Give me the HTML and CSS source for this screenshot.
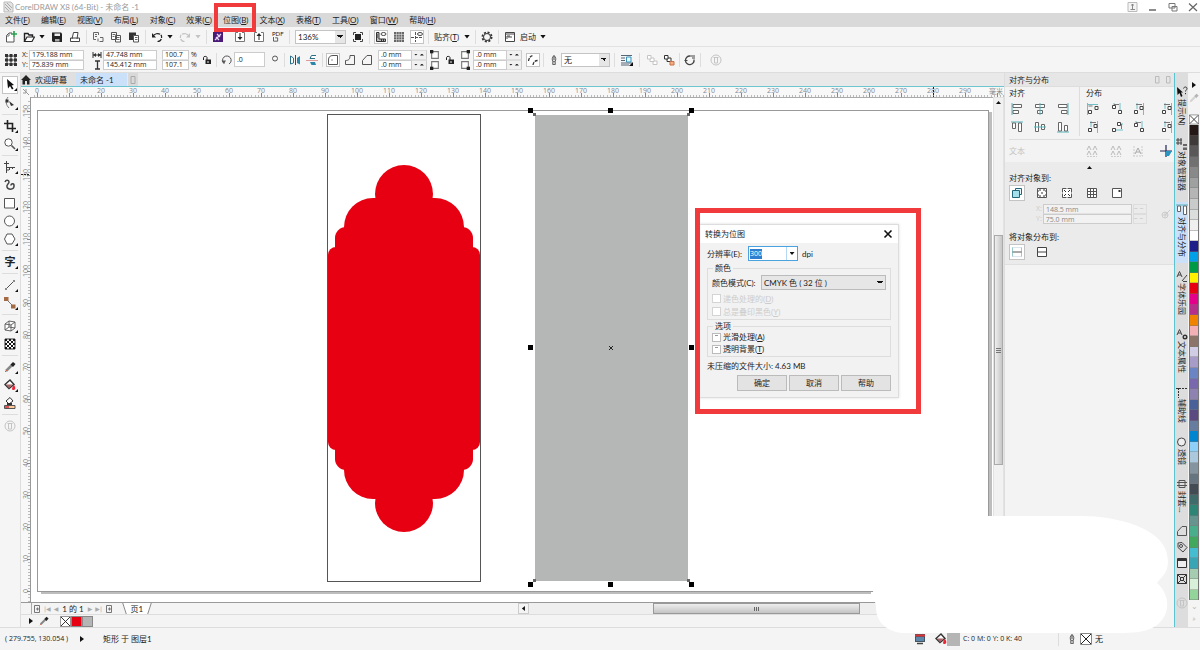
FILE: index.html
```html
<!DOCTYPE html>
<html lang="zh-CN">
<head>
<meta charset="utf-8">
<title>CorelDRAW X8 (64-Bit) - 未命名 -1</title>
<link rel="stylesheet" href="styles.css">
</head>
<body>
<svg class="defs" aria-hidden="true">
  <symbol id="new" viewBox="0 0 12 12"><path d="M7 2H4L1.500 4.500V11H9V6" fill="#fff" stroke="#555"/><path d="M4 2v3H1.500" fill="none" stroke="#777"/><path d="M9 0v6M6 3h6" stroke="#2f9d4f" stroke-width="1.600"/></symbol>
  <symbol id="open" viewBox="0 0 12 12"><path d="M1.500 10.500V2.500H5L6 4H9.500V6" fill="none" stroke="#222" stroke-width="1.400"/><path d="M1.500 10.500L4 6H11.500L9 10.500Z" fill="#fff" stroke="#222" stroke-width="1.200"/></symbol>
  <symbol id="save" viewBox="0 0 12 12"><path d="M1 1.500H10L11 2.500V11H2L1 10Z" fill="#222"/><path d="M3.500 2.500H9V5H3.500Z" fill="#eee"/><path d="M4 8H8.500V10.500H4Z" fill="#aaa"/></symbol>
  <symbol id="print" viewBox="0 0 12 12"><path d="M3 8L4.500 1.500H9L8 8M1.500 7V10.500H10.500V7Z" fill="#fff" stroke="#444"/></symbol>
  <symbol id="cut" viewBox="0 0 12 12"><path d="M1.500 1.500H6.500V4M1.500 1.500V8.500H4M3 3.500H5M3 5.500H5M6 10.500V7.500M7.500 10.500H11V6.500H8" fill="none" stroke="#666"/></symbol>
  <symbol id="copy" viewBox="0 0 12 12"><path d="M1.500 1.500H6.500V8.500H1.500ZM5.500 4.500H10.500V11H5.500Z" fill="#fff" stroke="#555"/><path d="M2.500 3.500H5.500M2.500 5.500H4.500M7 6.500H9.500M7 8.500H9.500" stroke="#666"/></symbol>
  <symbol id="paste" viewBox="0 0 12 12"><path d="M1 1.500H8V9H1Z" fill="#333"/><path d="M5.500 4.500H10.500V11H5.500Z" fill="#fff" stroke="#555"/><path d="M7 6.500H9.500M7 8.500H9.500" stroke="#666"/></symbol>
  <symbol id="undo" viewBox="0 0 12 12"><path d="M2 5C4 2 9 1.500 10.500 5C11 8 9.500 10.500 6.500 10.500" fill="none" stroke="currentColor" stroke-width="1.200" stroke-dasharray="8 1 3 1"/><path d="M1 2V6.500H5Z" fill="currentColor"/></symbol>
  <symbol id="redo" viewBox="0 0 12 12"><use href="#undo" transform="matrix(-1 0 0 1 12 0)"/></symbol>
  <symbol id="purple" viewBox="0 0 12 12"><path d="M1 1H11V11H1Z" fill="#4b1a78"/><path d="M3 9L9 3M5 3l3 3M4 6l3 3" stroke="#e5d6f2" stroke-width="1.300"/></symbol>
  <symbol id="import" viewBox="0 0 12 12"><path d="M4 1.500H1.500V10.500H10.500V1.500H8" fill="#fff" stroke="#777"/><path d="M6 2V7" stroke="#222"/><path d="M3.500 6H8.500L6 9Z" fill="#222"/></symbol>
  <symbol id="export" viewBox="0 0 12 12"><path d="M4 1.500H1.500V10.500H10.500V1.500H8" fill="#fff" stroke="#777"/><path d="M6 9V4" stroke="#222"/><path d="M3.500 5H8.500L6 2Z" fill="#222"/></symbol>
  <symbol id="full" viewBox="0 0 12 12"><path d="M3 3H9V9H3Z" fill="#222"/><path d="M1.500 4V1.500H4M8 1.500H10.500V4M10.500 8V10.500H8M4 10.500H1.500V8" fill="none" stroke="#444"/></symbol>
  <symbol id="rulers" viewBox="0 0 12 12"><path d="M1.500 1.500H4V8H10.500V10.500H1.500Z" fill="#bbb" stroke="#333"/><path d="M6.500 8v2M8.500 8v2M2 4h1M2 6h1" stroke="#333"/><ellipse cx="8.500" cy="3" rx="2.500" ry="1.500" fill="none" stroke="#444"/></symbol>
  <symbol id="grid" viewBox="0 0 12 12"><path d="M1 1H11V11H1Z" fill="#666"/><path d="M1 3.500H11M1 6H11M1 8.500H11M3.500 1V11M6 1V11M8.500 1V11" stroke="#ddd" stroke-width=".6"/></symbol>
  <symbol id="guides" viewBox="0 0 12 12"><path d="M0 6.500H11M4.500 1V11" stroke="#555" stroke-dasharray="3 1"/><ellipse cx="9" cy="3" rx="2.500" ry="1.500" fill="none" stroke="#444"/></symbol>
  <symbol id="gear" viewBox="0 0 12 12"><circle cx="6" cy="6" r="4.500" fill="none" stroke="#333" stroke-width="2" stroke-dasharray="2 1.530"/><circle cx="6" cy="6" r="3.500" fill="#f6f6f6" stroke="#333"/></symbol>
  <symbol id="launch" viewBox="0 0 12 12"><path d="M1.500 1.500H10.500V10.500H1.500Z" fill="#fff" stroke="#444"/><path d="M1 3H11" stroke="#444"/><path d="M3 8V5H6M4 6h4" stroke="#444" fill="none"/></symbol>
  <symbol id="origin" viewBox="0 0 12 12"><path d="M2 2H10V10H2ZM2 6H10M6 2V10" fill="none" stroke="#444"/><path d="M0 0h3v3H0zM4.500 0h3v3h-3zM9 0h3v3H9zM0 4.500h3v3H0zM4.500 4.500h3v3h-3zM9 4.500h3v3H9zM0 9h3v3H0zM4.500 9h3v3h-3zM9 9h3v3H9z" fill="#333"/></symbol>
  <symbol id="wid" viewBox="0 0 10 10"><path d="M1 2V8M9 2V8M1 5H9" stroke="#333"/><path d="M1 5L4 3V7ZM9 5L6 3V7Z" fill="#333"/></symbol>
  <symbol id="hei" viewBox="0 0 10 10"><path d="M3 1H8M3 9H8M5.500 1V9" stroke="#333" stroke-width="1.300"/></symbol>
  <symbol id="lock" viewBox="0 0 10 10"><path d="M3.500 4.500H9V9H3.500Z" fill="#222"/><path d="M1.500 5V2.500C1.500 1 5 1 5 2.500V5" fill="none" stroke="#222"/><path d="M6 6v2" stroke="#eee"/></symbol>
  <symbol id="rot" viewBox="0 0 12 12"><path d="M3 9.500A4.300 4.300 0 1 1 8 10" fill="none" stroke="#555"/><path d="M0.500 6.500H5L3 10Z" fill="#555"/></symbol>
  <symbol id="mirh" viewBox="0 0 12 12"><path d="M1.500 2V10L4.500 9V4Z" fill="#fff" stroke="#2b6f86"/><path d="M6.500 1V11" stroke="#444"/><path d="M11 2V10.500L8 9V4Z" fill="#2d87a8"/></symbol>
  <symbol id="mirv" viewBox="0 0 12 12"><path d="M0 6.500H12" stroke="#d99"/><path d="M10 1.500H5.500L4 4.500H9" fill="#fff" stroke="#2b6f86"/><path d="M10 11H5.500L4 8H9Z" fill="#2d87a8"/></symbol>
  <symbol id="c1" viewBox="0 0 12 12"><path d="M1.500 10.500V6C1.500 3 3 1.500 6 1.500H10.500V10.500Z" fill="none" stroke="#555"/><path d="M5 5.500v1" stroke="#333"/></symbol>
  <symbol id="c2" viewBox="0 0 12 12"><path d="M1.500 10.500V6.500C5 6.500 6 5 6 1.500H10.500V10.500Z" fill="none" stroke="#555"/></symbol>
  <symbol id="c3" viewBox="0 0 12 12"><path d="M1.500 10.500V6.500L6 1.500H10.500V10.500Z" fill="none" stroke="#555"/></symbol>
  <symbol id="corner" viewBox="0 0 9 9"><path d="M1.500 1.500H7.500V7.500H1.500Z" fill="#fff" stroke="#777"/><path d="M0 0H3V3H0Z" fill="#222"/></symbol>
  <symbol id="scale" viewBox="0 0 12 12"><path d="M1.500 7C2 3.500 3.500 2 6.500 1.500M6 11C6.500 8 8 6.500 11 6.500" fill="none" stroke="#333" stroke-width="1.300" stroke-dasharray="3 1"/></symbol>
  <symbol id="pen" viewBox="0 0 10 12"><path d="M5 .5C7.500 3 7.500 5 6.500 8H3.500C2.500 5 2.500 3 5 .5ZM5 1V6M3.500 8.500V11.500H6.500V8.500" fill="#ddd" stroke="#444"/></symbol>
  <symbol id="wrap" viewBox="0 0 12 12"><path d="M0 1.500H11M0 4H4M0 6.500H4M0 9H11M0 11H8" stroke="#567"/><path d="M5.500 3H10V8H5.500Z" fill="#dff" stroke="#3a8eb8"/><path d="M12 8V12H8Z" fill="#111"/></symbol>
  <symbol id="order" viewBox="0 0 12 12"><path d="M1.500 1.500H5V5H1.500ZM4 5V7.500H8V4H5M7 7.500V10.500H11V7H8" fill="#fff" stroke="currentColor"/></symbol>
  <symbol id="order2" viewBox="0 0 12 12"><path d="M1.500 1.500H5V5H1.500ZM4 5V7.500H8V4H5" fill="#fff" stroke="#333"/><path d="M7 7.500H11V11H7Z" fill="#f3ae86" stroke="#c87347"/></symbol>
  <symbol id="curve" viewBox="0 0 12 12"><path d="M10 5.500A4.300 4.300 0 1 1 6 2" fill="none" stroke="#444" stroke-width="1.300"/><path d="M6 2H11M8 4H11M0.500 6.500h3" stroke="#444"/></symbol>
  <symbol id="plus" viewBox="0 0 12 12"><circle cx="6" cy="6" r="5" fill="none" stroke="currentColor"/><path d="M3.500 3.500H8.500M4.500 3.500V9H7.500V3.500" fill="none" stroke="currentColor"/></symbol>
  <symbol id="home" viewBox="0 0 10 10"><path d="M5 0L0 5H1.500V9.500H4V6H6V9.500H8.500V5H10Z" fill="#222"/></symbol>
  <symbol id="pick" viewBox="0 0 12 12"><path d="M3 0L4 9.500L6 7L8 10.500L9.500 9.500L7.500 6.500L10 6Z" fill="#111"/></symbol>
  <symbol id="shape" viewBox="0 0 12 12"><path d="M4 0C1 4 2 8 5 11" fill="none" stroke="#777"/><path d="M1.500 2.500h3v3h-3zM5 4L10 8L7 9Z" fill="#333"/></symbol>
  <symbol id="crop" viewBox="0 0 12 12"><path d="M3.500 0V8.500H12M0 3.500H8.500V12" fill="none" stroke="#222" stroke-width="1.600"/></symbol>
  <symbol id="zoomt" viewBox="0 0 12 12"><circle cx="4.500" cy="4.500" r="3.700" fill="#fff" stroke="#555"/><path d="M7.500 7.500L11 11" stroke="#555" stroke-width="1.600"/></symbol>
  <symbol id="free" viewBox="0 0 12 12"><path d="M2.500 0V12M0 2.500H5M3 6.500H11M5.500 6V9M8.500 6V8M3 9h2" fill="none" stroke="#444"/></symbol>
  <symbol id="art" viewBox="0 0 12 12"><path d="M1 3C2 .5 5 1 5 3C5 5 2 5.500 3 8C4 11 9.500 11 10 7.500C10.500 4 7 4 7 6.500" fill="none" stroke="#444" stroke-width="1.500"/></symbol>
  <symbol id="rect" viewBox="0 0 12 12"><path d="M.5 1.500H10.500V11H.5Z" fill="#fff" stroke="#555"/></symbol>
  <symbol id="ell" viewBox="0 0 12 12"><circle cx="5.500" cy="6" r="5" fill="#fff" stroke="#555"/></symbol>
  <symbol id="lens" viewBox="0 0 12 12"><circle cx="5.500" cy="6" r="4" fill="#eee" stroke="#444"/></symbol>
  <symbol id="poly" viewBox="0 0 12 12"><path d="M3 1H8L11 6L8 11H3L.5 6Z" fill="#fff" stroke="#555"/></symbol>
  <symbol id="line" viewBox="0 0 12 12"><path d="M2 10L10 2" stroke="#555"/><path d="M1 9h2v2H1zM9 1h2v2H9z" fill="#888"/></symbol>
  <symbol id="conn" viewBox="0 0 12 12"><path d="M2 2L9.500 9.500" stroke="#777"/><path d="M0 0h4.500v4H0zM7 7.500h4.500v4H7z" fill="#a36a43"/></symbol>
  <symbol id="cube" viewBox="0 0 12 12"><path d="M1 4L5 1L11 2V8L7 11L1 10ZM1 4L7 5L11 2M7 5V11M5 1V7L1 10M5 7L11 8" fill="#fff" stroke="#555" stroke-width=".9"/></symbol>
  <symbol id="check" viewBox="0 0 12 12"><path d="M1 1H11V11H1Z" fill="#fff" stroke="#333"/><path d="M1 2H11M1 6H11M1 10H11" stroke="#111" stroke-width="2" stroke-dasharray="2 2"/><path d="M3 4H11M3 8H11" stroke="#111" stroke-width="2" stroke-dasharray="2 2"/></symbol>
  <symbol id="drop" viewBox="0 0 12 12"><path d="M2 10L8 4" stroke="#888" stroke-width="2.500"/><path d="M6.500 3.500L9 1L11.500 3L9 6Z" fill="#222"/><path d="M1 11L3 9" stroke="#c06a4a"/></symbol>
  <symbol id="bucket" viewBox="0 0 12 12"><path d="M1 5.500L6 1L10 5.500L5 9.500Z" fill="#fff" stroke="#333" stroke-width="1.400"/><path d="M2 5.500H9L5 9Z" fill="#a66"/><path d="M10 6C12 8.500 11.500 11 9.500 11S7.500 9 10 6Z" fill="#e23"/></symbol>
  <symbol id="smart" viewBox="0 0 12 12"><path d="M2 4L6 0.500L9 4L5 7Z" fill="#fff" stroke="#333"/><path d="M3 6h5v2H3z" fill="#333"/><path d="M.5 8.500H11V11.500H.5Z" fill="#fc9" stroke="#555"/><path d="M1 9h4v2H1z" fill="#d55"/></symbol>
  <symbol id="ax" viewBox="0 0 12 12"><path d="M1 0V12" stroke="#56b4bd"/><path d="M2 1.500H10.500V4.500H2ZM2 7.500H7.500V10.500H2Z" fill="#fff" stroke="#666"/></symbol>
  <symbol id="ac" viewBox="0 0 12 12"><path d="M1.500 1.500H10.500V4.500H1.500ZM3.500 7.500H8.500V10.500H3.500Z" fill="#fff" stroke="#666"/><path d="M6 0V12" stroke="#56b4bd"/></symbol>
  <symbol id="d1" viewBox="0 0 12 12"><path d="M.5 0V12M0 1.500H11" stroke="#70bfc7"/><path d="M1.500 7.500H4.500V10.500H1.500ZM8 3.500H11V6.500H8Z" fill="#fff" stroke="#444"/><path d="M1.500 3h4" stroke="#777"/></symbol>
  <symbol id="d2" viewBox="0 0 12 12"><path d="M3 0V6M9 0V8" stroke="#70bfc7"/><path d="M1.500 2.500H4.500V5.500H1.500ZM7.500 7.500H10.500V10.500H7.500Z" fill="#fff" stroke="#444"/><path d="M3 1.500h5" stroke="#777"/></symbol>
  <symbol id="d3" viewBox="0 0 12 12"><path d="M4 0V6M10.500 0V12" stroke="#70bfc7"/><path d="M1.500 7.500H4.500V10.500H1.500ZM7 3.500H10V6.500H7Z" fill="#fff" stroke="#444"/><path d="M3 1.500h6" stroke="#777"/></symbol>
  <symbol id="dock-a" viewBox="0 0 12 12"><path d="M2 1V11M10 1V11M1 11H11" stroke="#ccc" stroke-dasharray="2 1"/><path d="M3 9L6 3L9 9M4 7H8" stroke="#aaa" fill="none"/></symbol>
  <symbol id="dock-b" viewBox="0 0 12 12"><path d="M1 11.500H11" stroke="#ccc" stroke-dasharray="2 1"/><path d="M1 5L3 1L5 5M7 5L9 1L11 5M1 10L3 6L5 10M7 10L9 6L11 10" stroke="#bbb" fill="none"/></symbol>
  <symbol id="blueplus" viewBox="0 0 12 12"><path d="M6 0V12M0 6H12" stroke="#225" stroke-width="1.200"/><path d="M6 6H12L9 11H6Z" fill="#2d95bd"/></symbol>
  <symbol id="objs" viewBox="0 0 12 12"><path d="M4.500 1.500H10.500V7.500H4.500Z" fill="#eafafc" stroke="#267"/><path d="M1.500 3.500H8.500V10.500H1.500Z" fill="#a5dfeb" stroke="#267"/></symbol>
  <symbol id="pge" viewBox="0 0 12 12"><path d="M1.500 1.500H10.500V10.500H1.500Z" fill="#fff" stroke="#555"/><path d="M4 2v2M8 2v2M4 8v2M8 8v2M2 4h1M9 4h1M2 8h1M9 8h1M6 5v2" stroke="#333"/></symbol>
  <symbol id="pgc" viewBox="0 0 12 12"><path d="M1.500 1.500H10.500V10.500H1.500Z" fill="#fff" stroke="#555"/><path d="M3 3l2 2M9 3L7 5M3 9l2-2M9 9L7 7" stroke="#333"/><path d="M6 0v2M6 10v2M0 6h2M10 6h2" stroke="#fff"/></symbol>
  <symbol id="pgg" viewBox="0 0 12 12"><path d="M1.500 1.500H10.500V10.500H1.500ZM4.500 1V11M7.500 1V11M1 4.500H11M1 7.500H11" fill="#fff" stroke="#555"/></symbol>
  <symbol id="pgp" viewBox="0 0 12 12"><path d="M1.500 1.500H10.500V10.500H1.500Z" fill="#fff" stroke="#555"/><path d="M7 4h3M8.500 3v2" stroke="#333"/></symbol>
  <symbol id="ext" viewBox="0 0 12 12"><path d="M1.500 1V11M10.500 1V11" stroke="#9cc" /><path d="M1.500 6H10.500" stroke="#555"/><path d="M1.500 1.500H10.500M1.500 10.500H10.500" stroke="#dde6ee"/></symbol>
  <symbol id="extp" viewBox="0 0 12 12"><path d="M1.500 1.500H10.500V10.500H1.500ZM1.500 6H10.500" fill="#fff" stroke="#444"/></symbol>
  <symbol id="hint" viewBox="0 0 12 12"><path d="M1 1L1.500 9L3.500 7L5 11L6.500 10L5 6.500H7Z" fill="#111"/><path d="M7.500 2.500C8 .5 11 .5 11 2.500C11 4 9.500 4 9.500 5.500M9.500 7v1.200" fill="none" stroke="#333"/></symbol>
  <symbol id="tree" viewBox="0 0 12 12"><path d="M0 2H6M0 5H6M2 0V7M5 0V7" stroke="#444"/><path d="M7 6h4v2H7zM7 9.500h4V12H7z" fill="#666"/></symbol>
  <symbol id="font" viewBox="0 0 12 12"><path d="M1 7L3.500 1.500L6 7M2 5H5M6 11L11 5M7 11.500H11" fill="none" stroke="#444"/></symbol>
  <symbol id="fprop" viewBox="0 0 12 12"><path d="M1 7L3.500 1.500L6 7M2 5H5" fill="none" stroke="#444"/><circle cx="9" cy="9" r="1.800" fill="none" stroke="#333" stroke-width="1.400"/></symbol>
  <symbol id="guidei" viewBox="0 0 12 12"><path d="M0 2.500H12M2.500 2V12" stroke="#333" stroke-dasharray="2 1"/></symbol>
  <symbol id="tag" viewBox="0 0 12 12"><path d="M2 2L6 1.500L11 6.500L7 11L2 6.500Z" fill="#ddd" stroke="#444"/><circle cx="5" cy="5" r="1.500" fill="none" stroke="#444"/></symbol>
  <symbol id="win" viewBox="0 0 12 12"><path d="M1.500 1.500H10.500V10.500H1.500Z" fill="#eee" stroke="#333"/><path d="M1 3H11" stroke="#333" stroke-width="2"/></symbol>
  <symbol id="bevel" viewBox="0 0 12 12"><path d="M1.500 1.500H10.500V10.500H1.500ZM4.500 4.500H7.500V7.500H4.500ZM1.500 1.500L4.500 4.500M10.500 1.500L7.500 4.500M10.500 10.500L7.500 7.500M1.500 10.500L4.500 7.500" fill="none" stroke="#333"/></symbol>
  <symbol id="env" viewBox="0 0 12 12"><path d="M3 2.500H9V9.500H3ZM1 4.500H11M1 7.500H11" fill="none" stroke="#555"/></symbol>
  <symbol id="none" viewBox="0 0 12 12"><path d="M.5 .5H11.500V11.500H.5Z" fill="#fff" stroke="#888"/><path d="M1 1L11 11M11 1L1 11" stroke="#222"/></symbol>
  <symbol id="mon" viewBox="0 0 12 12"><path d="M1 1H11V9H1Z" fill="#456"/><path d="M1 2.500H11" stroke="#d33" stroke-width="2"/><path d="M2 5H10M2 7H10" stroke="#7be"/><path d="M3 10.500H9" stroke="#444" stroke-width="1.500"/></symbol>
  <symbol id="addp" viewBox="0 0 8 8"><path d="M1.500 .5H6.500V7.500H1.500ZM3 4H6M4.500 2.500V5.500" fill="none" stroke="#777"/></symbol>
</svg>

<header class="titlebar">
  <svg class="i12" viewBox="0 0 12 12"><path d="M2 1H9L11 3V11H2Z" fill="#e4e4e4" stroke="#bbb"/><path d="M3 3L9 9M5 2L10 7M3 6L7 10" stroke="#aaa"/></svg>
  <h1>CorelDRAW X8 (64-Bit) - 未命名 -1</h1>
  <div class="winbtns">
    <button aria-label="用户"><svg viewBox="0 0 12 12"><path d="M1 1.500H10V10.500H1Z" fill="#f4f4f4" stroke="#bbb"/><path d="M5.500 3V8M3.500 8.500H8M4 4H7" stroke="#888"/></svg></button>
    <button aria-label="最小化"><svg viewBox="0 0 12 12"><path d="M2 9H9" stroke="#666" stroke-width="1.500"/></svg></button>
    <button aria-label="还原"><svg viewBox="0 0 12 12"><path d="M2 2.500H8V7H2ZM5 5.500H10V10H5Z" fill="#fff" stroke="#777"/></svg></button>
    <button aria-label="关闭"><svg viewBox="0 0 12 12"><path d="M2 2.500L10 10M10 2.500L2 10" stroke="#666" stroke-width="1.200"/></svg></button>
  </div>
</header>

<nav class="menubar">
  <button>文件(<u>F</u>)</button><button>编辑(<u>E</u>)</button><button>视图(<u>V</u>)</button><button>布局(<u>L</u>)</button><button>对象(<u>C</u>)</button><button>效果(<u>C</u>)</button><button class="marked">位图(<u>B</u>)</button><button>文本(<u>X</u>)</button><button>表格(<u>T</u>)</button><button>工具(<u>O</u>)</button><button>窗口(<u>W</u>)</button><button>帮助(<u>H</u>)</button>
</nav>

<div class="toolbar standard">
  <button aria-label="新建"><svg class="i12"><use href="#new"/></svg></button>
  <button class="split" aria-label="打开"><svg class="i12"><use href="#open"/></svg><i class="caret"></i></button>
  <button aria-label="保存"><svg class="i12"><use href="#save"/></svg></button>
  <button aria-label="打印"><svg class="i12"><use href="#print"/></svg></button>
  <i class="sep"></i>
  <button aria-label="剪切"><svg class="i12"><use href="#cut"/></svg></button>
  <button aria-label="复制"><svg class="i12"><use href="#copy"/></svg></button>
  <button aria-label="粘贴"><svg class="i12"><use href="#paste"/></svg></button>
  <i class="sep"></i>
  <button class="split" aria-label="撤消"><svg class="i12"><use href="#undo"/></svg><i class="caret"></i></button>
  <button class="split off" aria-label="重做"><svg class="i12"><use href="#redo"/></svg><i class="caret"></i></button>
  <i class="sep"></i>
  <button aria-label="搜索内容"><svg class="i12"><use href="#purple"/></svg></button>
  <div class="io">
    <button aria-label="导入"><svg class="i12"><use href="#import"/></svg></button>
    <button aria-label="导出"><svg class="i12"><use href="#export"/></svg></button>
    <button class="pdf" aria-label="发布为 PDF">PDF<svg class="i6" viewBox="0 0 8 6"><path d="M1 0V5H6V1H3" fill="none" stroke="#444"/></svg></button>
  </div>
  <i class="sep"></i>
  <select class="combo zoomlevel" aria-label="缩放级别"><option>136%</option></select>
  <button aria-label="全屏预览"><svg class="i12"><use href="#full"/></svg></button>
  <i class="sep"></i>
  <button class="on" aria-label="显示标尺"><svg class="i12"><use href="#rulers"/></svg></button>
  <button aria-label="显示网格"><svg class="i12"><use href="#grid"/></svg></button>
  <button class="on" aria-label="显示辅助线"><svg class="i12"><use href="#guides"/></svg></button>
  <i class="sep"></i>
  <button class="split snap"><span>贴齐(<u>T</u>)</span><i class="caret"></i></button>
  <i class="sep"></i>
  <button aria-label="选项"><svg class="i12"><use href="#gear"/></svg></button>
  <i class="sep"></i>
  <button class="split"><svg class="i12"><use href="#launch"/></svg>启动<i class="caret"></i></button>
</div>

<div class="toolbar property">
  <svg class="i12"><use href="#origin"/></svg>
  <div class="pair"><label>X:<input class="w-xy" value="179.188 mm"></label><label>Y:<input class="w-xy" value="75.839 mm"></label></div>
  <div class="pair size"><label><svg class="i10"><use href="#wid"/></svg><input class="w-xy" aria-label="宽度" value="47.748 mm"></label><label><svg class="i10"><use href="#hei"/></svg><input class="w-xy" aria-label="高度" value="145.412 mm"></label></div>
  <div class="pair"><label><input class="w-pct" aria-label="水平缩放" value="100.7"><span class="pc">%</span></label><label><input class="w-pct" aria-label="垂直缩放" value="107.1"><span class="pc">%</span></label></div>
  <button aria-label="锁定比率"><svg class="i10"><use href="#lock"/></svg></button>
  <i class="sep"></i>
  <label class="rotate"><svg class="i12"><use href="#rot"/></svg><input aria-label="旋转角度" value=".0"></label>
  <svg class="i10" viewBox="0 0 10 10"><circle cx="5" cy="3.500" r="2.500" fill="none" stroke="#555"/></svg>
  <i class="sep"></i>
  <button aria-label="水平镜像"><svg class="i12"><use href="#mirh"/></svg></button>
  <button aria-label="垂直镜像"><svg class="i12"><use href="#mirv"/></svg></button>
  <i class="sep"></i>
  <button class="on" aria-label="圆角"><svg class="i12"><use href="#c1"/></svg></button>
  <button aria-label="扇形角"><svg class="i12"><use href="#c2"/></svg></button>
  <button aria-label="倒棱角"><svg class="i12"><use href="#c3"/></svg></button>
  <div class="radii">
    <div class="pair"><div class="spin"><input aria-label="左上角" value=".0 mm"><i></i><i class="up"></i></div><div class="spin"><input aria-label="左下角" value=".0 mm"><i></i><i class="up"></i></div></div>
    <div class="pair"><svg class="i10"><use href="#corner"/></svg><svg class="i10 down"><use href="#corner"/></svg></div>
  </div>
  <button aria-label="同时编辑所有角"><svg class="i10"><use href="#lock"/></svg></button>
  <div class="radii mirrored">
    <div class="pair"><svg class="i10"><use href="#corner"/></svg><svg class="i10 down"><use href="#corner"/></svg></div>
    <div class="pair"><div class="spin"><input aria-label="右上角" value=".0 mm"><i></i><i class="up"></i></div><div class="spin"><input aria-label="右下角" value=".0 mm"><i></i><i class="up"></i></div></div>
  </div>
  <button class="on" aria-label="相对角缩放"><svg class="i12"><use href="#scale"/></svg></button>
  <i class="sep"></i>
  <label class="outline"><svg class="i10"><use href="#pen"/></svg><select class="combo" aria-label="轮廓宽度"><option>无</option></select></label>
  <i class="sep"></i>
  <button class="wrapbtn" aria-label="文本换行"><svg class="i12"><use href="#wrap"/></svg></button>
  <i class="sep"></i>
  <button class="off" aria-label="到图层前面"><svg class="i12"><use href="#order"/></svg></button>
  <button aria-label="到图层后面"><svg class="i12"><use href="#order2"/></svg></button>
  <i class="sep"></i>
  <button aria-label="转换为曲线"><svg class="i12"><use href="#curve"/></svg></button>
  <i class="sep"></i>
  <button class="off last" aria-label="快速自定义"><svg class="i12"><use href="#plus"/></svg></button>
</div>

<main class="main">
  <aside class="toolbox">
    <button class="on fly" aria-label="选择"><svg class="i12"><use href="#pick"/></svg></button>
    <button class="fly" aria-label="形状"><svg class="i12"><use href="#shape"/></svg></button>
    <i></i>
    <button class="fly" aria-label="裁剪"><svg class="i12"><use href="#crop"/></svg></button>
    <button class="fly" aria-label="缩放"><svg class="i12"><use href="#zoomt"/></svg></button>
    <i></i>
    <button class="fly" aria-label="手绘"><svg class="i12"><use href="#free"/></svg></button>
    <button aria-label="艺术笔"><svg class="i12"><use href="#art"/></svg></button>
    <button class="fly" aria-label="矩形"><svg class="i12"><use href="#rect"/></svg></button>
    <button class="fly" aria-label="椭圆形"><svg class="i12"><use href="#ell"/></svg></button>
    <button class="fly" aria-label="多边形"><svg class="i12"><use href="#poly"/></svg></button>
    <i></i>
    <button class="fly glyph">字</button>
    <i></i>
    <button class="fly" aria-label="平行度量"><svg class="i12"><use href="#line"/></svg></button>
    <button class="fly" aria-label="连接器"><svg class="i12"><use href="#conn"/></svg></button>
    <i></i>
    <button class="fly" aria-label="立体化"><svg class="i12"><use href="#cube"/></svg></button>
    <button aria-label="透明度"><svg class="i12"><use href="#check"/></svg></button>
    <i></i>
    <button class="fly" aria-label="颜色滴管"><svg class="i12"><use href="#drop"/></svg></button>
    <button class="fly" aria-label="交互式填充"><svg class="i12"><use href="#bucket"/></svg></button>
    <button aria-label="智能填充"><svg class="i12"><use href="#smart"/></svg></button>
    <i></i>
    <button class="off" aria-label="快速自定义"><svg class="i12"><use href="#plus"/></svg></button>
  </aside>

  <section class="workspace">
    <div class="doctabs">
      <button class="welcome"><svg class="i10"><use href="#home"/></svg>欢迎屏幕</button>
      <button class="active">未命名 -1</button>
      <button class="add" aria-label="新文档"><svg class="i10" viewBox="0 0 10 10"><path d="M3 1.500H7V8.500H3Z" fill="none" stroke="#aaa"/></svg></button>
    </div>
    <div class="hruler"><svg id="hr"></svg></div>
    <div class="drawing">
      <svg id="vr" class="vruler"></svg>
      <div class="stage">
        <svg class="art" aria-label="绘图窗口">
          <rect x="958" y="15" width="3" height="482" fill="#bdbdbd"/>
          <rect x="10" y="494" width="830" height="3" fill="#bdbdbd"/>
          <rect x="6.500" y="13.500" width="951" height="481" fill="#fff" stroke="#999"/>
          <rect x="296.500" y="17.500" width="153" height="467" fill="#fff" stroke="#555"/>
          <g fill="#e60012">
            <circle cx="373" cy="97" r="29"/><circle cx="373" cy="406" r="29"/>
            <rect x="313" y="101" width="120" height="301" rx="29"/>
            <rect x="304" y="130" width="138" height="243" rx="11"/>
            <rect x="297" y="150" width="152" height="203" rx="8"/>
          </g>
          <rect x="504" y="18" width="153" height="466" fill="#b5b6b6"/>
          <path d="M578 249l4 4M582 249l-4 4" stroke="#222"/>
          <path d="M497 11h5v5h-5zM577 11h5v5h-5zM658 11h5v5h-5zM497 248h5v5h-5zM658 248h5v5h-5zM497 485h5v5h-5zM577 485h5v5h-5zM658 485h5v5h-5z" fill="#000"/>
          <path d="M502 16h3v3h-3zM656 16h3v3h-3zM502 482h3v3h-3zM656 482h3v3h-3z" fill="#666"/>
        </svg>

        <form class="dialog" onsubmit="return false">
          <header><h2>转换为位图</h2><button aria-label="关闭"><svg class="i10" viewBox="0 0 10 10"><path d="M1.500 1.500L8.500 8.500M8.500 1.500L1.500 8.500" stroke="#111" stroke-width="1.600"/></svg></button></header>
          <div class="row res"><label for="dpi">分辨率(E):</label><div class="dpibox"><input id="dpi" value="300"><button aria-label="分辨率列表"><i class="caret"></i></button></div><span>dpi</span></div>
          <fieldset class="colour"><legend>颜色</legend>
            <div class="row mode"><label for="mode">颜色模式(C):</label><select id="mode"><option>CMYK 色 ( 32 位 )</option></select></div>
            <label class="ck dis"><input type="checkbox" disabled><span>递色处理的(<u>D</u>)</span></label>
            <label class="ck dis"><input type="checkbox" disabled><span>总是叠印黑色(<u>Y</u>)</span></label>
          </fieldset>
          <fieldset><legend>选项</legend>
            <label class="ck"><input type="checkbox"><span>光滑处理(<u>A</u>)</span></label>
            <label class="ck"><input type="checkbox"><span>透明背景(<u>T</u>)</span></label>
          </fieldset>
          <p>未压缩的文件大小: 4.63 MB</p>
          <footer><button>确定</button><button>取消</button><button>帮助</button></footer>
        </form>
        <div class="frame"></div>
      </div>
      <div class="vscroll"><button aria-label="向上滚动"><i class="caret up"></i></button><div class="vtrack"><i></i></div></div>
    </div>
    <div class="pagebar">
      <div class="pager">
        <button aria-label="添加页"><svg class="i8"><use href="#addp"/></svg></button>
        <button class="dim">|◀</button><button class="dim">◀</button>
        <span>1 的 1</span>
        <button class="dim">▶</button><button class="dim">▶|</button>
        <button aria-label="添加页"><svg class="i8"><use href="#addp"/></svg></button>
      </div>
      <button class="pagetab"><span>页1</span></button>
      <div class="hscroll"><button aria-label="向左滚动"><i class="caret left"></i></button><div class="track"><i></i></div></div>
    </div>
    <div class="docpalette">
      <i class="caret right"></i><svg class="i10"><use href="#drop"/></svg>
      <div><svg class="sw"><use href="#none"/></svg><i class="sw red"></i><i class="sw grey"></i></div>
    </div>
  </section>

  <aside class="docker">
    <header>对齐与分布<span><svg class="i10" viewBox="0 0 10 10"><path d="M3.500 1.500H7V8H3.500Z" fill="none" stroke="#bbb"/></svg><svg class="i10" viewBox="0 0 10 10"><path d="M3.500 1.500H7V8H3.500Z" fill="none" stroke="#bbb"/></svg></span></header>
    <div class="aligns">
      <div class="block left"><h3>对齐</h3>
        <div class="cells">
          <button aria-label="左对齐"><svg class="i12"><use href="#ax"/></svg></button>
          <button aria-label="水平居中对齐"><svg class="i12"><use href="#ac"/></svg></button>
          <button class="flip" aria-label="右对齐"><svg class="i12"><use href="#ax"/></svg></button>
          <button class="turn" aria-label="顶端对齐"><svg class="i12"><use href="#ax"/></svg></button>
          <button class="turnup" aria-label="垂直居中对齐"><svg class="i12"><use href="#ac"/></svg></button>
          <button class="turnup" aria-label="底端对齐"><svg class="i12"><use href="#ax"/></svg></button>
        </div>
      </div>
      <div class="block right"><h3>分布</h3>
        <div class="cells four">
          <button aria-label="左分散排列"><svg class="i12"><use href="#d1"/></svg></button>
          <button aria-label="水平分散排列中心"><svg class="i12"><use href="#d2"/></svg></button>
          <button aria-label="右分散排列"><svg class="i12"><use href="#d3"/></svg></button>
          <button aria-label="水平分散排列间距"><svg class="i12"><use href="#d3"/></svg></button>
          <button aria-label="顶部分散排列"><svg class="i12"><use href="#d3"/></svg></button>
          <button class="turn" aria-label="垂直分散排列中心"><svg class="i12"><use href="#d2"/></svg></button>
          <button aria-label="底部分散排列"><svg class="i12"><use href="#d2"/></svg></button>
          <button aria-label="垂直分散排列间距"><svg class="i12"><use href="#d3"/></svg></button>
        </div>
      </div>
    </div>
    <div class="textrow"><span>文本</span><div class="cells four"><svg class="i12"><use href="#dock-b"/></svg><svg class="i12"><use href="#dock-b"/></svg><svg class="i12"><use href="#dock-a"/></svg><svg class="i12"><use href="#blueplus"/></svg></div></div>
    <div class="targets">
      <i class="caret up"></i>
      <h3>对齐对象到:</h3>
      <div class="opts"><button class="on" aria-label="活动对象"><svg class="i12"><use href="#objs"/></svg></button><button aria-label="页面边缘"><svg class="i12"><use href="#pge"/></svg></button><button aria-label="页面中心"><svg class="i12"><use href="#pgc"/></svg></button><button aria-label="网格"><svg class="i12"><use href="#pgg"/></svg></button><button aria-label="指定点"><svg class="i12"><use href="#pgp"/></svg></button></div>
      <div class="point"><div class="pair"><label>X:<input disabled value="148.5 mm"><em>− −</em></label><label>Y:<input disabled value="75.0 mm"><em>− −</em></label></div><svg class="i12" viewBox="0 0 12 12"><circle cx="6" cy="7" r="3" fill="none" stroke="#ccc"/><path d="M6 7L11 2M6 4v6M3 7h6" stroke="#ccc"/></svg></div>
      <h3>将对象分布到:</h3>
      <div class="opts"><button class="on" aria-label="选定的范围"><svg class="i12"><use href="#ext"/></svg></button><button aria-label="页面范围"><svg class="i12"><use href="#extp"/></svg></button></div>
    </div>
  </aside>

  <nav class="docktabs">
    <button><svg class="i12"><use href="#hint"/></svg><span>提示(N)</span></button>
    <button><svg class="i12"><use href="#tree"/></svg><span>对象管理器</span></button>
    <button class="active"><svg class="i12 q"><use href="#ax"/></svg><span>对齐与分布</span></button>
    <button><svg class="i12"><use href="#font"/></svg><span>字体乐园</span></button>
    <button><svg class="i12"><use href="#fprop"/></svg><span>文本属性</span></button>
    <button><svg class="i12"><use href="#guidei"/></svg><span>辅助线</span></button>
    <button><svg class="i12"><use href="#lens"/></svg><span>透镜</span></button>
    <button><svg class="i12"><use href="#env"/></svg><span>封套...</span></button>
    <div class="minis"><svg class="i12"><use href="#c3"/></svg><svg class="i12"><use href="#tag"/></svg><svg class="i12"><use href="#win"/></svg><svg class="i12"><use href="#bevel"/></svg></div>
    <button class="off" aria-label="快速自定义"><svg class="i12"><use href="#plus"/></svg></button>
  </nav>

  <aside class="palette">
    <div class="ptop"><i class="caret right"></i><svg class="i10 faint"><use href="#drop"/></svg></div>
    <svg class="nofill"><use href="#none"/></svg>
    <div id="swatches"></div>
    <div class="pend"><span>⌄</span><span>»</span></div>
  </aside>
</main>

<footer class="status">
  <span class="coords">( 279.755, 130.054 )</span><i class="caret right"></i><span class="obj">矩形 于 图层1</span>
  <div class="fillinfo"><svg class="i12"><use href="#mon"/></svg><svg class="i12 bk"><use href="#bucket"/></svg><i class="chip"></i><span>C: 0 M: 0 Y: 0 K: 40</span></div>
  <div class="lineinfo"><svg class="i10"><use href="#pen"/></svg><svg class="i12"><use href="#none"/></svg><span>无</span></div>
</footer>
<svg class="cover" viewBox="0 0 300 120" aria-hidden="true"><path d="M3 76L2 40L90 1H215C250 2 298 14 298 46C298 58 292 61 287 68C296 76 300 88 295 100C288 114 275 118 250 118H32C15 116 6 106 6 92Z" fill="#fff"/></svg>
<script src="app.js"></script>
</body>
</html>
```
FILE: styles.css
```css
* { box-sizing: border-box; }
html, body { height: 100%; }
body {
  margin: 0; display: flex; flex-direction: column; min-height: 100vh; position: relative; overflow: hidden;
  font: 8px/12px Lato, "Noto Sans CJK SC", sans-serif; color: #222; background: #f4f4f4;
}
button, input, select { font: inherit; color: inherit; margin: 0; padding: 0; border: 0; background: none; border-radius: 0; }
button { display: flex; align-items: center; justify-content: center; white-space: nowrap; flex: none; }
select { appearance: none; }
h1, h2, h3, p { margin: 0; font: inherit; }
svg { display: block; flex: none; }
i { font-style: normal; flex: none; }
u { text-underline-offset: 1px; }
.defs { position: absolute; width: 0; height: 0; }
.i6 { width: 8px; height: 5px; }
.i8 { width: 8px; height: 8px; }
.i10 { width: 10px; height: 10px; }
.i12 { width: 12px; height: 12px; }
.off { color: #c4c4c4; }
.on { outline: 1px solid #c4c4c4; background: #fff; }
.caret { width: 6px; height: 4px; background: #111; clip-path: polygon(0 0, 100% 0, 50% 100%); }
.caret.up { clip-path: polygon(0 100%, 100% 100%, 50% 0); }
.caret.right { width: 4px; height: 6px; clip-path: polygon(0 0, 100% 50%, 0 100%); }
.caret.left { width: 3px; height: 5px; clip-path: polygon(100% 0, 0 50%, 100% 100%); }
.off .caret { background: #c4c4c4; }

.titlebar { display: flex; align-items: center; height: 13px; flex: none; padding: 0 1px 0 2px; background: #fff; color: #999; gap: 1px; }
.winbtns { margin-left: auto; display: flex; gap: 8px; }
.winbtns svg { width: 12px; height: 12px; }

.menubar { display: flex; gap: 11px; height: 14px; flex: none; padding: 0 5px; background: #d9d9d9; }
.menubar button { min-width: 25px; justify-content: flex-start; }
.marked { position: relative; }
.marked::after { content: ""; position: absolute; left: -9px; right: -8px; top: -10px; bottom: -5px; border: 4px solid #f03a3c; z-index: 5; }

.toolbar { display: flex; align-items: center; flex: none; background: #f5f5f5; }
.standard { height: 20px; gap: 6px; padding: 0 5px; border-bottom: 1px solid #e2e2e2; }
.property { height: 26px; gap: 5px; padding: 0 5px; border-bottom: 1px solid #ddd; }
.split { gap: 4px; }
.snap { min-width: 36px; justify-content: space-between; }
.sep { width: 1px; height: 14px; margin: 0 -1px; background: #ddd; }
.io { display: flex; gap: 7px; margin-left: 4px; }
.pdf { flex-direction: column; font-size: 6px; line-height: 6px; width: 12px; align-items: flex-start; }
.combo { border: 1px solid #c4c4c4; padding-left: 2px; height: 14px; }
.combo, .mode select {
  background:
    linear-gradient(to top right, transparent 50%, #111 0) no-repeat right 5px center / 3px 3px,
    linear-gradient(to top left, transparent 50%, #111 0) no-repeat right 2px center / 3px 3px,
    linear-gradient(#e6e6e6, #e6e6e6) no-repeat right / 10px 100%, #fff;
}
.zoomlevel { width: 51px; }
.outline select { width: 49px; }

.pair { display: flex; flex-direction: column; }
.pair, .rotate, .dpibox input { font-family: "Open Sans", sans-serif; font-size: 7px; }
.pair label { display: flex; align-items: center; height: 10px; }
.pair input, .rotate input { height: 10px; border: 1px solid #ccc; background: #fff; padding-left: 2px; line-height: 8px; }
.pair label:first-child input, .spin:first-child input { border-bottom-color: #e2e2e2; }
.w-xy { width: 55px; margin-left: 1px; }
.w-pct { width: 27px; }
.pc { width: 8px; padding-left: 2px; }
.size { margin-left: 3px; }
.size .w-xy { width: 54px; }
.rotate { display: flex; gap: 1px; align-items: center; }
.rotate input { width: 31px; height: 15px; }
.radii { display: flex; gap: 3px; align-items: center; }
.down { transform: scaleY(-1); }
.mirrored .i10 { transform: scaleX(-1); }
.mirrored .down { transform: scale(-1, -1); }
.spin { display: flex; height: 10px; align-items: center; background: #f0f0f0; border-right: 1px solid #ccc; border-block: 1px solid #ddd; }
.spin input { width: 34px; }
.spin i { width: 4px; height: 2px; margin-left: 2px; background: #222; clip-path: polygon(0 0, 100% 0, 50% 100%); }
.spin i.up { clip-path: polygon(0 100%, 100% 100%, 50% 0); margin-right: 2px; }
.outline { display: flex; gap: 2px; align-items: center; margin-left: 1px; }
.wrapbtn { margin-left: 2px; }
.wrapbtn + .sep { margin: 0 1px; }
.property .last { margin-left: 5px; }

.main { flex: 1; display: flex; min-height: 0; }
.toolbox { width: 21px; flex: none; padding: 3px 2px 0; display: flex; flex-direction: column; border-right: 1px solid #ddd; background: #f5f5f5; }
.toolbox button { height: 18px; position: relative; }
.toolbox .on { height: 16px; margin: 1px; }
.toolbox > i { height: 1px; margin: 2px 0; background: #ddd; }
.fly::after { content: ""; position: absolute; right: 0; bottom: 2px; width: 3px; height: 3px; background: #111; clip-path: polygon(100% 0, 100% 100%, 0 100%); }
.glyph { font-size: 11px; font-weight: bold; }

.workspace { flex: 1; min-width: 0; display: flex; flex-direction: column; }
.doctabs { height: 14px; flex: none; display: flex; background: #e9e9e9; border-bottom: 1px solid #6cc5cf; }
.welcome { gap: 4px; padding: 0 9px 0 0; background: #e0e0e0; }
.doctabs .active { background: #cbe1fa; padding: 0 13px 0 4px; }
.doctabs .add { margin-left: 1px; background: #d9d9d9; }
.hruler { height: 11px; flex: none; background: #f8f8f8; border-bottom: 1px solid #aaa; margin-bottom: -1px; }
.hruler svg { width: 100%; height: 10px; }
.drawing { flex: 1; min-height: 0; display: flex; }
.vruler { width: 10px; height: 100%; background: #f8f8f8; }
.hruler text, .vruler text { font: 7px "Open Sans", "Noto Sans CJK SC", sans-serif; fill: #888; }
.stage { flex: 1; min-width: 0; position: relative; background: linear-gradient(#aaa 1px, #fff 0); }
.art { width: 100%; height: 100%; overflow: hidden; }
.vscroll { width: 11px; flex: none; display: flex; flex-direction: column; background: #f1f1f1; border: 1px solid #e2e2e2; }
.vscroll button { height: 9px; }
.vscroll .up { width: 5px; height: 3px; }
.vtrack { flex: 1; display: grid; grid-template-rows: 128fr 230fr 136fr; }
.vtrack i { grid-row: 2; border: 1px solid #aaa; background: repeating-linear-gradient(#777 0 1px, transparent 1px 2px) center / 5px 5px no-repeat, linear-gradient(90deg, #eee, #c6c6c6); }
.pagebar { height: 12px; flex: none; display: flex; padding-left: 10px; background: #f4f4f4; border-top: 1px solid #999; }
.pager { display: flex; align-items: center; gap: 3px; padding: 0 11px 0 1px; border-left: 1px solid #aaa; }
.pager span { padding: 0 1px; }
.dim { color: #aaa; font: 6px/10px "DejaVu Sans", sans-serif; }
.pagetab { width: 26px; position: relative; }
.pagetab::before, .pagetab::after { content: ""; position: absolute; top: 0; bottom: 0; left: 0; width: 60%; background: #fff; border-left: 1px solid #888; transform: skewX(18deg); }
.pagetab::after { left: auto; right: 0; border-left: 0; border-right: 1px solid #888; transform: skewX(-18deg); }
.pagetab span { position: relative; z-index: 1; }
.hscroll { flex: 1; display: flex; margin-left: 368px; background: #efefef; }
.hscroll button { width: 11px; border: 1px solid #ccc; background: #f4f4f4; }
.track { flex: 1; display: grid; grid-template-columns: 124fr 207fr 144fr; }
.track i { grid-column: 2; border: 1px solid #999; background: repeating-linear-gradient(90deg, #666 0 1px, transparent 1px 2px) center / 5px 4px no-repeat, linear-gradient(#eee, #c4c4c4); }
.docpalette { height: 13px; flex: none; display: flex; align-items: center; gap: 6px; padding-left: 8px; border-top: 1px solid #ddd; }
.docpalette div { display: flex; padding-left: 5px; }
.sw { width: 11px; height: 11px; border: 1px solid #888; }
svg.sw { border: 0; }
.red { background: #e60012; }
.grey { background: #b5b5b6; }

.docker { width: 171px; flex: none; background: #f3f3f3; border-left: 1px solid #ddd; border-right: 1px solid #5cc3d0; }
.docker header { height: 14px; display: flex; align-items: center; justify-content: space-between; padding: 0 1px 0 4px; background: #e6e6e6; border-bottom: 1px solid #ddd; }
.docker header span { display: flex; gap: 1px; }
.aligns { display: flex; margin: 0 4px; border-bottom: 1px solid #ddd; padding-bottom: 3px; }
.block h3 { height: 13px; }
.block.left { width: 71px; border-right: 1px solid #ddd; }
.block.right { padding-left: 6px; }
.block.right .cells { padding-left: 1px; }
.cells { display: grid; }
.cells button { height: 18px; justify-content: flex-start; width: 16px; }
.four { grid-template-columns: 24px 22px 28px 12px; }
.block.left .cells { grid-template-columns: repeat(3, 23px); padding-left: 2px; }
.flip svg { transform: scaleX(-1); }
.turn svg { transform: rotate(90deg); }
.turnup svg { transform: rotate(-90deg); }
.textrow { height: 22px; display: flex; align-items: center; padding-left: 4px; color: #c4c4c4; }
.textrow span { width: 77px; }
.targets { background: #ebebeb; padding: 4px 3px 3px; display: flex; flex-direction: column; border-bottom: 1px solid #e0e0e0; }
.targets > .caret { width: 5px; height: 3px; align-self: center; margin-bottom: 2px; }
.targets h3 { padding-left: 1px; margin-top: 1px; }
.opts { display: flex; gap: 11px; height: 18px; align-items: center; padding-left: 2px; }
.opts button { width: 14px; height: 14px; }
.point { display: flex; gap: 12px; align-items: center; padding-left: 28px; margin: 2px 0 6px; color: #888; }
.point label { gap: 1px; color: #ccc; }
.point input { width: 89px; background: #f2f2f2; color: #888; }
.point em { font-style: normal; width: 14px; color: #bbb; border: 1px solid #ddd; height: 10px; line-height: 7px; }

.docktabs { width: 13px; flex: none; display: flex; flex-direction: column; gap: 11px; background: #ddd; padding-top: 12px; }
.docktabs button { flex-direction: column; gap: 1px; padding: 1px 0; }
.docktabs .active { background: #cbe1fa; box-shadow: 0 5px #cbe1fa, 0 -1px #cbe1fa; }
.docktabs span { writing-mode: vertical-rl; text-orientation: sideways; line-height: 12px; }
.q { transform: rotate(90deg); }
.minis { display: flex; flex-direction: column; align-items: center; gap: 4px; }

.palette { width: 12px; flex: none; display: flex; flex-direction: column; background: #f4f4f4; padding: 0 1px; }
.ptop { height: 41px; display: flex; flex-direction: column; align-items: center; gap: 5px; padding-top: 9px; }
.faint { opacity: .3; }
.nofill { width: 10px; height: 11px; }
#swatches { flex: 1; display: flex; flex-direction: column; border-inline: 1px solid #777; }
#swatches i { flex: 1; border-bottom: 1px solid #7776; }
.pend { height: 27px; display: flex; flex-direction: column; align-items: center; color: #bbb; }

.status { height: 23px; flex: none; display: flex; align-items: center; padding: 0 97px 0 5px; border-top: 1px solid #ddd; }
.coords, .fillinfo span { font-family: "Open Sans", sans-serif; font-size: 7px; white-space: nowrap; }
.coords { width: 75px; }
.obj { padding-left: 19px; }
.fillinfo { margin-left: auto; display: flex; align-items: center; gap: 3px; width: 145px; border-right: 1px solid #ddd; }
.bk { margin-left: 6px; }
.chip { width: 13px; height: 13px; background: #b5b5b6; margin-left: -3px; }
.lineinfo { display: flex; align-items: center; gap: 3px; padding-left: 8px; }
.cover { position: absolute; left: 870px; top: 515px; width: 300px; height: 120px; }

.frame { position: absolute; left: 664px; top: 111px; width: 226px; height: 206px; border: 5px solid #f03a3c; pointer-events: none; }
.dialog { position: absolute; left: 668px; top: 127px; width: 200px; padding: 0 7px 6px; background: #f2f2f2; border: 1px solid #ddd; box-shadow: 0 0 3px #0002; }
.dialog header { display: flex; justify-content: space-between; align-items: center; height: 18px; margin: 0 -7px; padding: 0 5px; background: #fff; }
.row { display: flex; align-items: center; }
.res { height: 21px; }
.res label { width: 41px; }
.dpibox { display: flex; width: 50px; height: 15px; border: 1px solid #4aa3df; background: #fff; margin-right: 4px; align-items: center; }
.dpibox input { width: 12px; margin: 0 auto 0 1px; height: 10px; background: #2f7fd0; color: #fff; }
.dpibox button { width: 11px; height: 13px; border-left: 1px solid #b5d8f2; }
.dpibox .caret { width: 5px; height: 3px; }
fieldset { margin: 0; padding: 0 4px 1px; border: 1px solid #ddd; min-width: 0; }
legend { padding: 0 2px; margin-left: 1px; line-height: 9px; }
.colour { margin-bottom: 2px; }
.mode { height: 19px; }
.mode label { width: 49px; }
.mode select { flex: 1; height: 15px; border: 1px solid #bbb; padding-left: 2px; background-color: #e6e6e6; }
.ck { display: flex; align-items: center; gap: 2px; height: 12px; }
.ck input { appearance: none; width: 9px; height: 9px; border: 1px solid #bbb; background: linear-gradient(#999, #999) 2px 1px / 3px 1px no-repeat, #fff; }
.dis { color: #ccc; height: 13px; }
.dis input { border-color: #d4d4d4; background: #fff; }
.dialog p { padding-top: 3px; height: 18px; }
.dialog footer { display: flex; justify-content: flex-end; gap: 2px; }
.dialog footer button { width: 50px; height: 16px; background: #e3e3e3; border: 1px solid #bbb; }
```
FILE: app.js
```js
const NS = 'http://www.w3.org/2000/svg';
const add = (parent, tag, attrs, text) => {
  const el = document.createElementNS(NS, tag);
  for (const k in attrs) el.setAttribute(k, attrs[k]);
  if (text !== undefined) el.textContent = text;
  parent.append(el);
};
const STEP = 32;

// Horizontal ruler: zero sits 16px from the left edge.
const hr = document.getElementById('hr');
let minor = '', major = '';
for (let n = -1; n <= 303; n++) {
  const x = 16.5 + Math.round(n * STEP / 10);
  if (x < 12) continue;
  if (n % 10) minor += `M${x} 8V10`; else major += `M${x} 6V10`;
}
add(hr, 'path', { d: minor, stroke: '#bbb' });
add(hr, 'path', { d: major, stroke: '#888' });
for (let n = 0; n <= 29; n++) add(hr, 'text', { x: 16 + n * STEP, y: 6, 'text-anchor': 'middle' }, n * 10);
add(hr, 'text', { x: 968, y: 7 }, '毫米');
add(hr, 'path', { d: 'M912.500 0V10', stroke: '#222', 'stroke-dasharray': '2 1' });
add(hr, 'path', { d: 'M2 2L8 8M2 6H5M5 2V6', stroke: '#999', fill: 'none' });

// Vertical ruler counts upwards from the page's bottom edge.
const vr = document.getElementById('vr');
minor = ''; major = '';
for (let n = -3; n <= 153; n++) {
  const y = 494.5 - Math.round(n * STEP / 10);
  if (n % 10) minor += `M7 ${y}H9`; else major += `M6 ${y}H9`;
}
add(vr, 'path', { d: minor, stroke: '#bbb' });
add(vr, 'path', { d: major, stroke: '#888' });
add(vr, 'path', { d: 'M9.500 0V600', stroke: '#999' });
for (let n = 0; n <= 15; n++) {
  const y = 494 - n * STEP;
  add(vr, 'text', { x: 7, y, 'text-anchor': 'middle', transform: `rotate(-90 7 ${y})` }, n * 10);
}
add(vr, 'path', { d: 'M0 77.500H9', stroke: '#222', 'stroke-dasharray': '2 1' });

const colours = `231815 3e3a39 595757 727171 898989 9fa0a0 b5b5b6 c9caca dcdddd efefef ffffff
1d2088 00a0e9 009944 fff100 e60012 e5008c b5308a f08300 f3b0b5 8c7568 d0cde4 a79bc8 6a84c4 7a68ae 8d82b0
4a6098 5b4a80 687ca0 0086d1 8ed0f8 abc8dc 84959f 667580 434c54 3f6b6a 2f8575 669590 4aae8c 42a85e
45bcd0 3aa5b5 a5ccb0 d8efd8 93d49a`.split(/\s+/);
const box = document.getElementById('swatches');
for (const c of colours) {
  const s = document.createElement('i');
  s.style.background = '#' + c;
  box.append(s);
}
```
